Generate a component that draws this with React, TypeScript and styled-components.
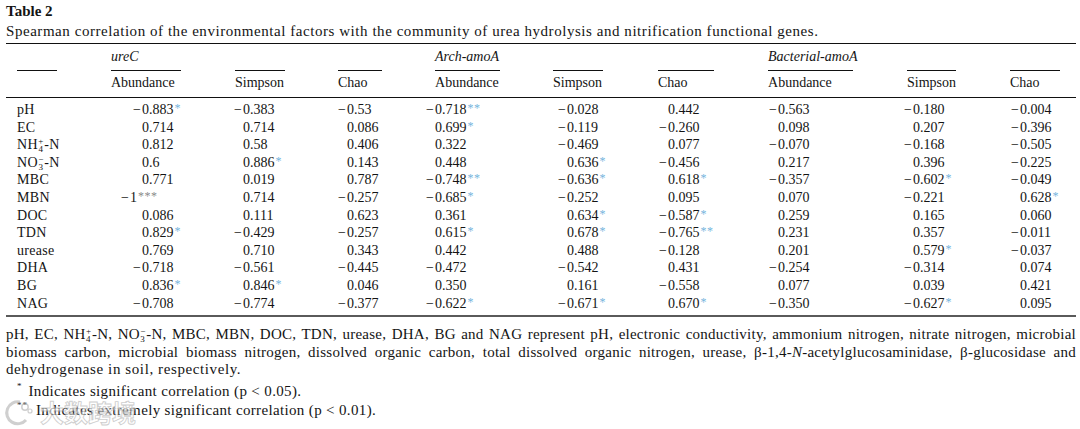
import styled, { createGlobalStyle } from "styled-components";

const GlobalStyle = createGlobalStyle`
  html, body { margin: 0; padding: 0; background: #ffffff; }
  body {
    font-family: "Liberation Serif", "Times New Roman", serif;
    color: #141414;
    -webkit-font-smoothing: antialiased;
  }
`;

// column geometry, measured from the reference
const colWidths = [105, 124, 103, 97, 118, 105, 110, 139, 103, 66];
const numOffsets = [31, 8, 9, 0, 14, 10, 10, 6, 10];
const ruleWidths = [40, 70, 50, 44, 65, 50, 56, 85, 49, 50];

const groups = ["ureC", "Arch-amoA", "Bacterial-amoA"];
const subCols = ["Abundance", "Simpson", "Chao"];

type Row = { label: React.ReactNode; key: string; values: string[] };

// stacked super/subscript, as in NH4+ and NO3-
const Stack = styled.span`
  display: inline-block;
  vertical-align: -3px;
  font-size: 9px;
  line-height: 8px;
  text-align: center;
  margin: 0 0.5px;

  span {
    display: block;
  }
`;

const NH4 = () => (
  <>
    NH<Stack><span>+</span><span>4</span></Stack>-N
  </>
);

const NO3 = () => (
  <>
    NO<Stack><span>−</span><span>3</span></Stack>-N
  </>
);

const rows: Row[] = [
  { key: "pH", label: "pH", values: ["−0.883*", "−0.383", "−0.53", "−0.718**", "−0.028", "0.442", "−0.563", "−0.180", "−0.004"] },
  { key: "EC", label: "EC", values: ["0.714", "0.714", "0.086", "0.699*", "−0.119", "−0.260", "0.098", "0.207", "−0.396"] },
  { key: "NH", label: <NH4 />, values: ["0.812", "0.58", "0.406", "0.322", "−0.469", "0.077", "−0.070", "−0.168", "−0.505"] },
  { key: "NO", label: <NO3 />, values: ["0.6", "0.886*", "0.143", "0.448", "0.636*", "−0.456", "0.217", "0.396", "−0.225"] },
  { key: "MBC", label: "MBC", values: ["0.771", "0.019", "0.787", "−0.748**", "−0.636*", "0.618*", "−0.357", "−0.602*", "−0.049"] },
  { key: "MBN", label: "MBN", values: ["−1***", "0.714", "−0.257", "−0.685*", "−0.252", "0.095", "0.070", "−0.221", "0.628*"] },
  { key: "DOC", label: "DOC", values: ["0.086", "0.111", "0.623", "0.361", "0.634*", "−0.587*", "0.259", "0.165", "0.060"] },
  { key: "TDN", label: "TDN", values: ["0.829*", "−0.429", "−0.257", "0.615*", "0.678*", "−0.765**", "0.231", "0.357", "−0.011"] },
  { key: "urease", label: "urease", values: ["0.769", "0.710", "0.343", "0.442", "0.488", "−0.128", "0.201", "0.579*", "−0.037"] },
  { key: "DHA", label: "DHA", values: ["−0.718", "−0.561", "−0.445", "−0.472", "−0.542", "0.431", "−0.254", "−0.314", "0.074"] },
  { key: "BG", label: "BG", values: ["0.836*", "0.846*", "0.046", "0.350", "0.161", "−0.558", "0.077", "0.039", "0.421"] },
  { key: "NAG", label: "NAG", values: ["−0.708", "−0.774", "−0.377", "−0.622*", "−0.671*", "0.670*", "−0.350", "−0.627*", "0.095"] },
];

const Page = styled.div`
  position: relative;
  width: 1080px;
  height: 429px;
  overflow: hidden;
  padding: 2px 4px 0 6px;
  box-sizing: border-box;
`;

const Title = styled.div`
  font-weight: bold;
  font-size: 15px;
  line-height: 18px;
`;

const Caption = styled.div`
  margin-top: 2px;
  font-size: 15px;
  line-height: 18px;
  letter-spacing: 0.55px;
  white-space: nowrap;
`;

const Table = styled.table`
  margin-top: 3px;
  width: 1070px;
  border-collapse: collapse;
  table-layout: fixed;
  border-top: 1px solid #111;
  border-bottom: 2px solid #5a5a5a;
  font-size: 14px;
`;

const GroupCell = styled.th`
  padding: 5px 0 0;
  line-height: 16px;
  text-align: left;
  font-weight: normal;
  font-style: italic;
  white-space: nowrap;
`;

const RuleCell = styled.th<{ $indent: number }>`
  padding: 5px 0 0 ${(p) => p.$indent}px;
  height: 1px;
  text-align: left;
`;

const ShortRule = styled.div<{ $w: number }>`
  width: ${(p) => p.$w}px;
  height: 1px;
  background: #111;
`;

const HeadCell = styled.th`
  padding: 4px 0 6px;
  line-height: 16px;
  text-align: left;
  font-weight: normal;
  border-bottom: 1px solid #111;
  white-space: nowrap;
`;

const BodyRow = styled.tr<{ $first: boolean; $last: boolean }>`
  td {
    height: 17.6px;
    line-height: 17.6px;
    padding-top: ${(p) => (p.$first ? "3px" : "0")};
    padding-bottom: ${(p) => (p.$last ? "3px" : "0")};
    white-space: nowrap;
  }
`;

const LabelCell = styled.td`
  padding-left: 11px;
  letter-spacing: 0.3px;
`;

const NumCell = styled.td<{ $offset: number }>`
  padding-left: ${(p) => p.$offset}px;
`;

const Num = styled.span<{ $neg: boolean; $shift: number }>`
  display: inline-block;
  margin-left: ${(p) => (p.$neg ? -10 : 0) + p.$shift}px;
`;

const Minus = styled.span`
  display: inline-block;
  width: 10px;
  text-align: right;
  padding-right: 1px;
  box-sizing: border-box;
`;

const Star = styled.span<{ $grey: boolean }>`
  font-size: 12px;
  line-height: 0;
  vertical-align: 2px;
  margin-left: 1px;
  letter-spacing: 0.5px;
  color: ${(p) => (p.$grey ? "#8a8a8a" : "#74b4dc")};
`;

const Notes = styled.div`
  margin-top: 9px;
  font-size: 15px;
  letter-spacing: 0.25px;
`;

const JustLine = styled.div<{ $fill: boolean }>`
  line-height: 17.5px;
  height: 17.5px;
  white-space: nowrap;
  text-align: ${(p) => (p.$fill ? "justify" : "left")};
  text-align-last: ${(p) => (p.$fill ? "justify" : "left")};
  letter-spacing: ${(p) => (p.$fill ? "0.25px" : "0.6px")};
`;

const FootLine = styled.div<{ $first: boolean }>`
  line-height: 19px;
  margin-top: ${(p) => (p.$first ? "3px" : "0")};
  padding-left: 11px;
  letter-spacing: 0.35px;
`;

const Mark = styled.span<{ $gap: number }>`
  font-size: 9px;
  line-height: 0;
  vertical-align: 7px;
  letter-spacing: 1px;
  margin-right: ${(p) => p.$gap}px;
`;

const Watermark = styled.div`
  position: absolute;
  left: 3px;
  bottom: 3px;
  display: flex;
  align-items: center;
  gap: 7px;
  opacity: 0.6;
  pointer-events: none;
`;

const WaterText = styled.span`
  font-family: "Noto Sans CJK SC", sans-serif;
  font-size: 24px;
  line-height: 28px;
  font-weight: bold;
  color: #ffffff;
  -webkit-text-stroke: 0.9px #b0b0b0;
`;

const NumberValue = ({ raw, col, row }: { raw: string; col: number; row: string }) => {
  const m = raw.match(/^(−?)([^*]+)(\*+)?$/);
  const neg = !!m?.[1];
  const body = m?.[2] ?? raw;
  const stars = m?.[3] ?? "";
  const grey = stars.length === 3;
  const shift = row === "MBN" && col === 0 ? -12 : 0;
  return (
    <Num $neg={neg} $shift={shift}>
      {neg && <Minus>−</Minus>}
      {body}
      {stars && <Star $grey={grey}>{stars}</Star>}
    </Num>
  );
};

export default function App() {
  return (
    <Page>
      <GlobalStyle />
      <Title>Table 2</Title>
      <Caption>
        Spearman correlation of the environmental factors with the community of urea hydrolysis and nitrification functional genes.
      </Caption>
      <Table>
        <colgroup>
          {colWidths.map((w, i) => (
            <col key={i} style={{ width: w }} />
          ))}
        </colgroup>
        <thead>
          <tr>
            <GroupCell />
            {groups.map((g) => (
              <GroupCell key={g} colSpan={3}>
                {g}
              </GroupCell>
            ))}
          </tr>
          <tr>
            {ruleWidths.map((w, i) => (
              <RuleCell key={i} $indent={i === 0 ? 11 : 0}>
                <ShortRule $w={w} />
              </RuleCell>
            ))}
          </tr>
          <tr>
            <HeadCell />
            {groups.map((g) =>
              subCols.map((c) => <HeadCell key={g + c}>{c}</HeadCell>)
            )}
          </tr>
        </thead>
        <tbody>
          {rows.map((r, ri) => (
            <BodyRow key={r.key} $first={ri === 0} $last={ri === rows.length - 1}>
              <LabelCell>{r.label}</LabelCell>
              {r.values.map((v, ci) => (
                <NumCell key={ci} $offset={numOffsets[ci]}>
                  <NumberValue raw={v} col={ci} row={r.key} />
                </NumCell>
              ))}
            </BodyRow>
          ))}
        </tbody>
      </Table>
      <Notes>
        <JustLine $fill>
          pH, EC, <NH4 />, <NO3 />, MBC, MBN, DOC, TDN, urease, DHA, BG and NAG represent pH, electronic conductivity, ammonium nitrogen, nitrate nitrogen, microbial
        </JustLine>
        <JustLine $fill>
          biomass carbon, microbial biomass nitrogen, dissolved organic carbon, total dissolved organic nitrogen, urease, β-1,4-<i>N</i>-acetylglucosaminidase, β-glucosidase and
        </JustLine>
        <JustLine $fill={false}>dehydrogenase in soil, respectively.</JustLine>
        <FootLine $first>
          <Mark $gap={6}>*</Mark>Indicates significant correlation (p &lt; 0.05).
        </FootLine>
        <FootLine $first={false}>
          <Mark $gap={8}>**</Mark>Indicates extremely significant correlation (p &lt; 0.01).
        </FootLine>
      </Notes>
      <Watermark>
        <svg width="30" height="28" viewBox="0 0 30 28" fill="none">
          <path d="M17 4 A11 11 0 1 0 23 22" stroke="#b0b0b0" strokeWidth="3" fill="none" />
          <circle cx="22" cy="9" r="3.2" stroke="#b0b0b0" strokeWidth="1.5" />
          <circle cx="27" cy="13" r="2" stroke="#b0b0b0" strokeWidth="1.2" />
        </svg>
        <WaterText>大数跨境</WaterText>
      </Watermark>
    </Page>
  );
}
